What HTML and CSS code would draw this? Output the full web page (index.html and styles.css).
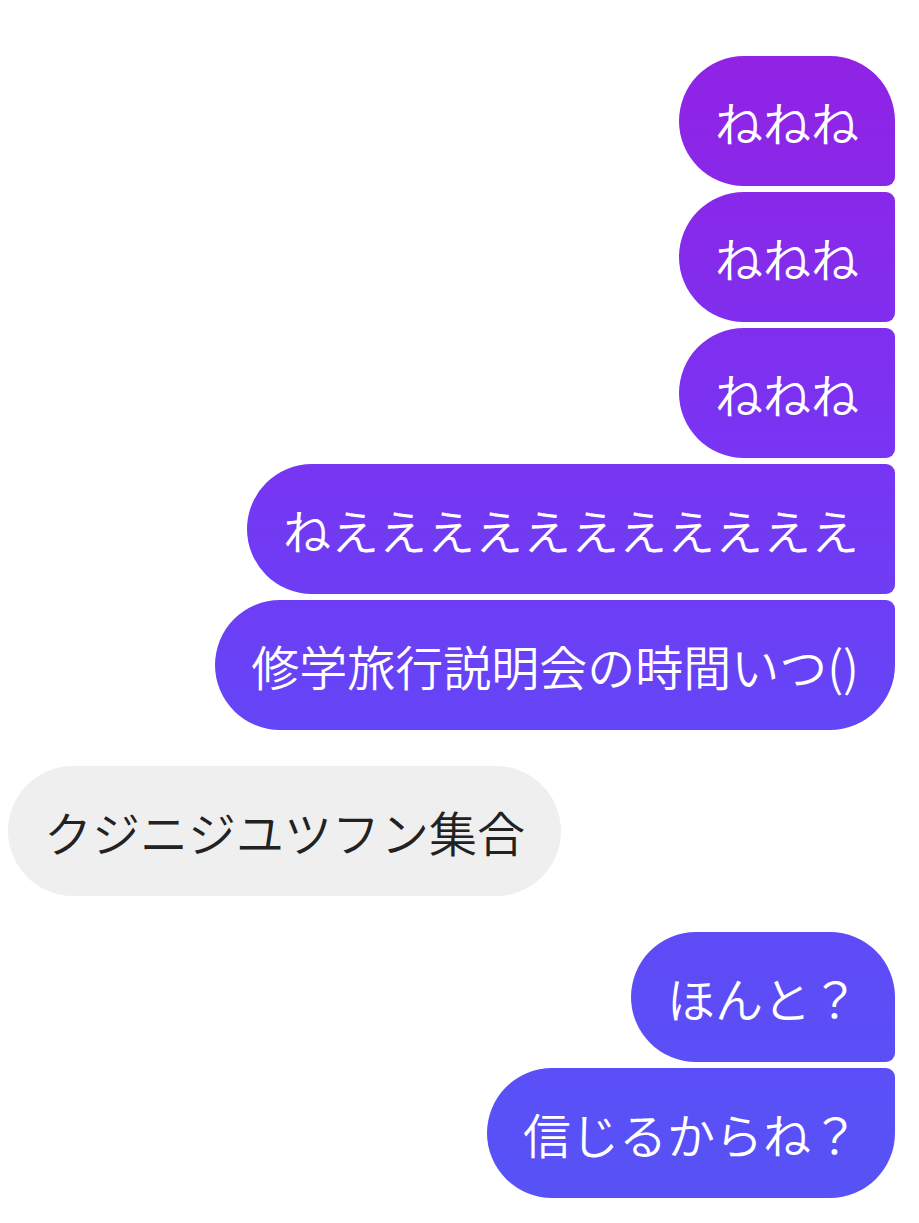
FILE: index.html
```html
<!DOCTYPE html>
<html lang="ja">
<head>
    <meta charset="UTF-8">
    <title>Chat</title>
    <link rel="stylesheet" href="styles.css">
</head>
<body>
    <div class="chat">
        <div class="group mine">
            <div class="bubble">ねねね</div>
            <div class="bubble">ねねね</div>
            <div class="bubble">ねねね</div>
            <div class="bubble">ねえええええええええええ</div>
            <div class="bubble">修学旅行説明会の時間いつ()</div>
        </div>
        <div class="group theirs">
            <div class="bubble">クジニジユツフン集合</div>
        </div>
        <div class="group mine">
            <div class="bubble">ほんと？</div>
            <div class="bubble">信じるからね？</div>
        </div>
    </div>
</body>
</html>
```

FILE: styles.css
```css
body {
    margin: 0;
    background: #ffffff;
    font-family: "Noto Sans CJK JP", "Noto Sans", sans-serif;
}

.chat {
    display: flex;
    flex-direction: column;
    gap: 36px;
    padding: 56px 24px 24px 8px;
}

.group {
    display: flex;
    flex-direction: column;
    gap: 6px;
}

.mine {
    align-items: flex-end;
}

.theirs {
    align-items: flex-start;
}

.bubble {
    font-size: 48px;
    font-weight: 350;
    line-height: 70px;
    padding: 30px 36px;
    border-radius: 65px;
    white-space: nowrap;
}

.mine .bubble {
    color: #ffffff;
    background: linear-gradient(180deg, #9420e2 0%, #7a33f2 35%, #6446f7 60%, #5653f6 100%);
    background-attachment: fixed;
    border-radius: 65px 9px 9px 65px;
}

.mine .bubble:first-child {
    border-top-right-radius: 65px;
}

.mine .bubble:last-child {
    border-bottom-right-radius: 65px;
}

.theirs .bubble {
    color: #222222;
    background: #efefef;
}
```
